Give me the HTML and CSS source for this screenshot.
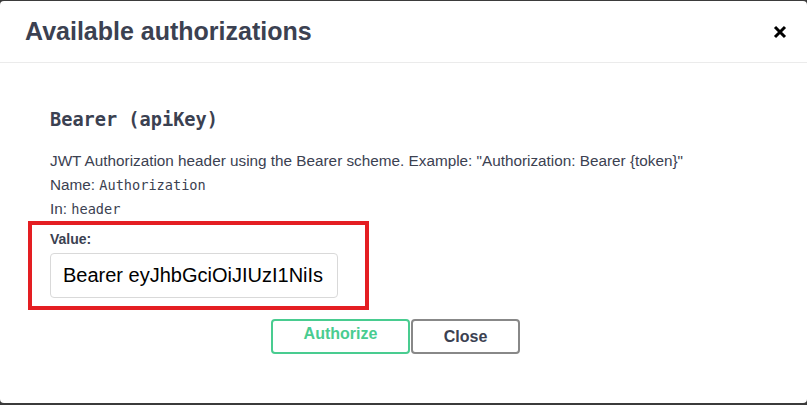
FILE: index.html
```html
<!DOCTYPE html>
<html>
<head>
<meta charset="utf-8">
<link rel="stylesheet" href="styles.css">
</head>
<body>
<div class="modal">
  <div class="modal-header">
    <h3 class="modal-title">Available authorizations</h3>
    <button class="close-x" aria-label="close">
      <svg width="14" height="14" viewBox="0 0 14 14"><path d="M2 2 L12 12 M12 2 L2 12" stroke="#000" stroke-width="3" stroke-linecap="butt"/></svg>
    </button>
  </div>
  <div class="modal-body">
    <h4 class="scheme-title">Bearer (apiKey)</h4>
    <p class="line">JWT Authorization header using the Bearer scheme. Example: "Authorization: Bearer {token}"</p>
    <p class="line">Name: <code>Authorization</code></p>
    <p class="line">In: <code>header</code></p>
    <div class="highlight">
      <label class="value-label">Value:</label>
      <div class="input">Bearer eyJhbGciOiJIUzI1NiIs</div>
    </div>
    <div class="btn-row">
      <button class="btn authorize">Authorize</button>
      <button class="btn close">Close</button>
    </div>
  </div>
</div>
</body>
</html>
```
FILE: styles.css
```css
html, body {
  margin: 0;
  padding: 0;
}
body {
  background: #3b3b3b;
  font-family: "Liberation Sans", Arial, sans-serif;
  color: #3b4151;
  height: 405px;
  overflow: hidden;
}
.modal {
  margin-top: 1px;
  height: 402px;
  background: #fff;
  border-radius: 4px;
}
.modal-header {
  height: 61px;
  border-bottom: 1px solid #ebebeb;
  display: flex;
  align-items: center;
  justify-content: space-between;
  padding: 0 20px 0 25px;
}
.modal-title {
  margin: 0;
  font-size: 25px;
  font-weight: bold;
  color: #3b4151;
}
.close-x {
  border: 0;
  background: none;
  padding: 0;
  display: flex;
}
.modal-body {
  padding: 40px 0 0 0;
}
.scheme-title {
  margin: 0 0 12px 50px;
  font-family: "DejaVu Sans Mono", monospace;
  font-size: 18.6px;
  font-weight: bold;
  line-height: 34px;
}
.line {
  margin: 0 0 0 50px;
  font-size: 15.3px;
  line-height: 24px;
  height: 24px;
}
.line code {
  font-family: "DejaVu Sans Mono", monospace;
  font-size: 13.6px;
  line-height: 1;
}
.highlight {
  margin: 0 0 0 28px;
  width: 315px;
  border: 4px solid #e41e22;
  padding: 4px 0 8px 18px;
}
.value-label {
  display: block;
  font-size: 14px;
  font-weight: bold;
  line-height: 20px;
  margin-bottom: 4px;
}
.input {
  box-sizing: border-box;
  width: 288px;
  height: 45px;
  border: 1px solid #d9d9d9;
  border-radius: 4px;
  padding: 0 12px;
  font-size: 20px;
  color: #000;
  display: flex;
  align-items: center;
}
.btn-row {
  display: flex;
  justify-content: center;
  gap: 1px;
  margin: 9px 0 0 0;
  padding-right: 16px;
}
.btn {
  font-family: "Liberation Sans", Arial, sans-serif;
  font-size: 16px;
  font-weight: bold;
  background: #fff;
  border-radius: 4px;
  height: 35px;
  padding: 0;
}
.authorize {
  width: 139px;
  border: 2px solid #49cc90;
  color: #49cc90;
  padding-bottom: 5px;
}
.close {
  width: 109px;
  border: 2px solid #888;
  color: #3b4151;
}
```
